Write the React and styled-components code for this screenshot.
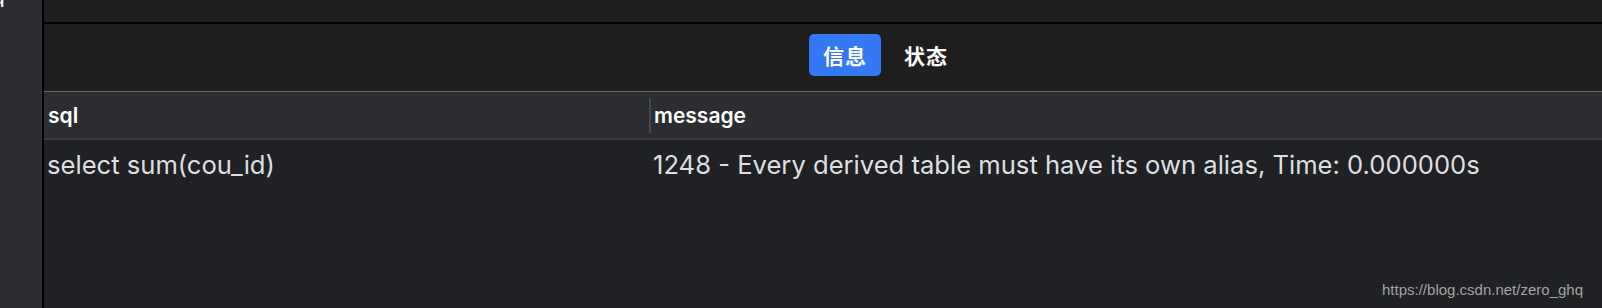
import React from "react";
import styled, { createGlobalStyle } from "styled-components";

const Global = createGlobalStyle`
  html, body { margin: 0; padding: 0; background: #202124; }
  body { width: 1602px; height: 308px; overflow: hidden; font-family: Inter, "Noto Sans", "Noto Sans CJK SC", sans-serif; }
`;

const Shell = styled.div`
  display: flex;
  width: 1602px;
  height: 308px;
  overflow: hidden;
`;

const Sidebar = styled.aside`
  position: relative;
  width: 42px;
  flex: none;
  background: #2c2d31;
  border-right: 2px solid #000;
  overflow: hidden;
`;

const Glyph = styled.span`
  position: absolute;
  left: -5px;
  top: -10px;
  color: #fff;
  font: 700 15px "Liberation Sans", sans-serif;
`;

const Main = styled.main`
  flex: 1;
  display: flex;
  flex-direction: column;
  min-width: 0;
  background: #202124;
`;

const TopStrip = styled.div`
  height: 22px;
  background: #1f1f20;
  border-bottom: 2px solid #000;
`;

const Toolbar = styled.div`
  height: 67px;
  box-sizing: border-box;
  display: flex;
  align-items: flex-start;
  padding: 10px 0 0 765px;
  gap: 9px;
  background: #1e1e1e;
`;

const Tab = styled.button`
  height: 42px;
  padding: 0 14px;
  border: none;
  border-radius: 5px;
  background: ${(p) => (p.$active ? "#3478f6" : "transparent")};
  color: #fff;
  font: 600 21px "Noto Sans CJK SC", sans-serif;
  letter-spacing: 1px;
  line-height: 42px;
`;

const Grid = styled.div`
  display: grid;
  grid-template-columns: 605px 1fr;
`;

const HeaderRow = styled(Grid)`
  height: 46px;
  border-top: 1px solid #666769;
  border-bottom: 2px solid #3b3d40;
  background: #2b2d31;
`;

const HeadCell = styled.div`
  position: relative;
  display: flex;
  align-items: center;
  padding-left: ${(p) => (p.$divider ? "5px" : "4px")};
  color: #fff;
  font: 600 21px Inter, "Noto Sans", sans-serif;
  ${(p) =>
    p.$divider &&
    `&::before {
      content: "";
      position: absolute;
      left: 0;
      top: 6px;
      bottom: 5px;
      width: 2px;
      background: #45474a;
    }`}
`;

const BodyRow = styled(Grid)`
  height: 48px;
  align-items: center;
`;

const Cell = styled.div`
  padding-left: ${(p) => (p.$second ? "4px" : "3px")};
  color: #dedfe0;
  font: 400 25.6px Inter, "Noto Sans", sans-serif;
  white-space: nowrap;
`;

const Filler = styled.div`
  flex: 1;
  display: flex;
  align-items: flex-end;
  justify-content: flex-end;
  padding: 0 19px 10px 0;
`;

const Watermark = styled.span`
  color: #a3a3a3;
  font: 400 15px "Liberation Sans", Arial, sans-serif;
`;

export default function App() {
  return (
    <>
      <Global />
      <Shell>
        <Sidebar>
          <Glyph>q</Glyph>
        </Sidebar>
        <Main>
          <TopStrip />
          <Toolbar>
            <Tab $active>信息</Tab>
            <Tab>状态</Tab>
          </Toolbar>
          <HeaderRow>
            <HeadCell>sql</HeadCell>
            <HeadCell $divider>message</HeadCell>
          </HeaderRow>
          <BodyRow>
            <Cell>select sum(cou_id)</Cell>
            <Cell $second>1248 - Every derived table must have its own alias, Time: 0.000000s</Cell>
          </BodyRow>
          <Filler>
            <Watermark>https://blog.csdn.net/zero_ghq</Watermark>
          </Filler>
        </Main>
      </Shell>
    </>
  );
}
